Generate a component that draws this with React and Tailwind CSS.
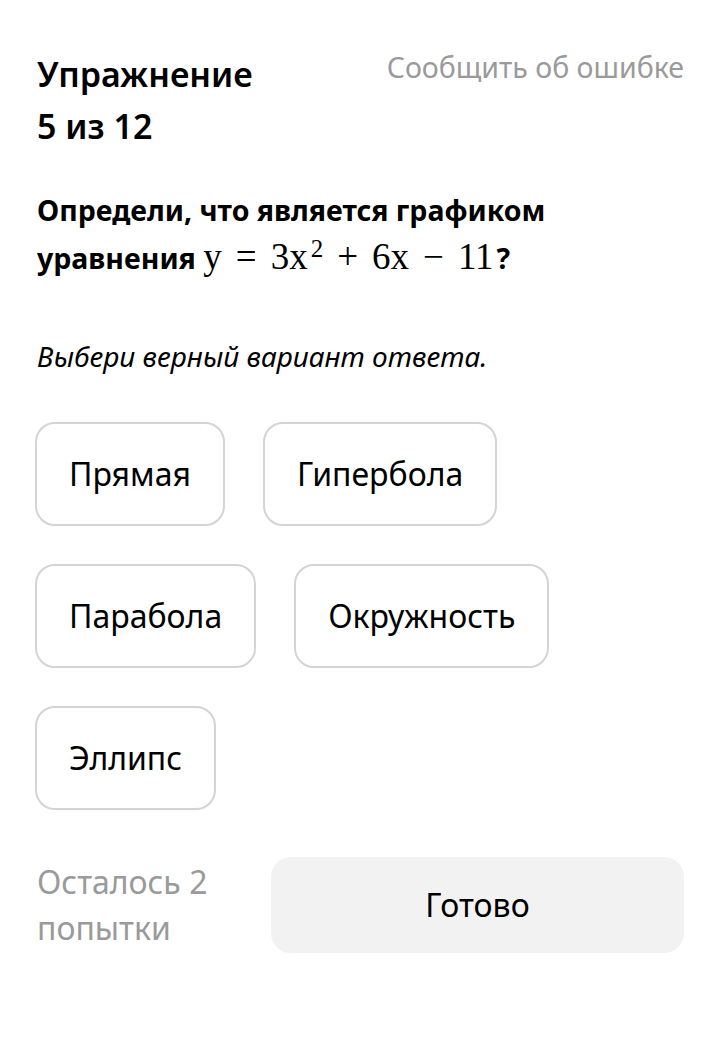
import React from 'react';

const options = [['Прямая', 'Гипербола'], ['Парабола', 'Окружность'], ['Эллипс']];

const Op = ({ children }) => <span className="mx-[14px]">{children}</span>;

const App = () => {
  return (
    <div className="min-h-[1048px] w-[720px] bg-white text-black font-['Source_Sans_Pro','Noto_Sans',sans-serif]">
      <div className="pl-[37px] pr-[36px] pt-[48px]">
        {/* Header */}
        <div className="flex items-start justify-between">
          <h1 className="text-[34px] font-semibold leading-[52px]">
            Упражнение
            <br />5 из 12
          </h1>
          <button className="pt-[2px] text-[28.5px] leading-[34px] text-[#9a9a9a]">Сообщить об ошибке</button>
        </div>

        {/* Question */}
        <p className="mt-[34px] text-[28.5px] font-bold leading-[48px]">
          Определи, что является графиком
          <br />
          уравнения{' '}
          <span className="font-['Liberation_Serif',serif] text-[37px] leading-[40px] font-normal">
            y<Op>=</Op>3x<sup className="ml-[3px] text-[25px]">2</sup>
            <Op>+</Op>6x<Op>−</Op>11
          </span>
          <span className="ml-[3px]">?</span>
        </p>

        <p className="mt-[54px] text-[28px] italic leading-[40px]">Выбери верный вариант ответа.</p>

        {/* Options */}
        <div className="-ml-[2px] mt-[46px] flex flex-col gap-[38px]">
          {options.map((row, i) => (
            <div key={i} className="flex gap-[38px]">
              {row.map((o) => (
                <button
                  key={o}
                  className="h-[104px] rounded-[20px] border-2 border-[#d4d4d4] px-[32px] text-[32px]"
                >
                  {o}
                </button>
              ))}
            </div>
          ))}
        </div>

        {/* Footer */}
        <div className="mt-[47px] flex items-center justify-between">
          <p className="text-[32px] leading-[46px] text-[#9a9a9a]">
            Осталось 2
            <br />
            попытки
          </p>
          <button className="h-[96px] w-[413px] rounded-[20px] bg-[#f2f2f2] text-[32px]">Готово</button>
        </div>
      </div>
    </div>
  );
};

export default App;
